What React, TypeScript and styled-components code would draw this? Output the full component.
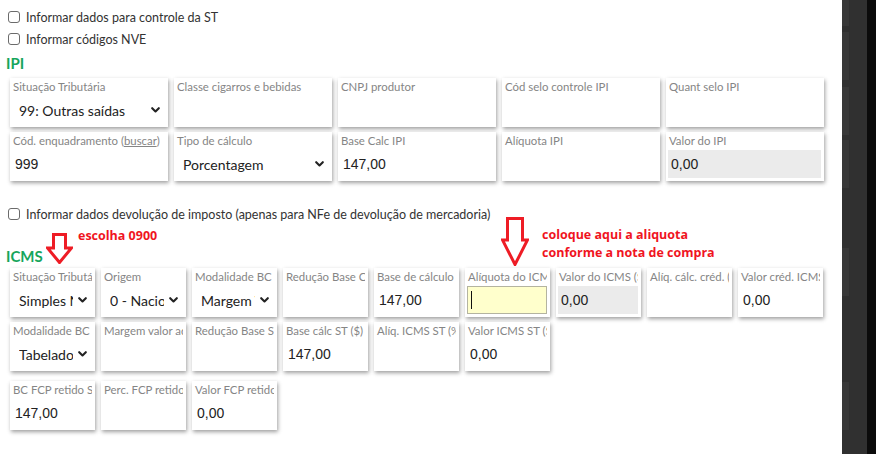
import React from "react";
import styled, { createGlobalStyle, css } from "styled-components";

const Global = createGlobalStyle`
  html, body { margin: 0; padding: 0; background: #fff; overflow: hidden; }
  body { font-family: "Lato", "Noto Sans", sans-serif; }
`;

const Page = styled.div`
  display: flex;
  width: 876px;
  height: 454px;
`;

const Main = styled.div`
  position: relative;
  flex: 1;
  padding: 6px 0 0 8px;
  box-sizing: border-box;
  background: #fff;
`;

const Side = styled.div`
  display: flex;
  width: 34px;
  height: 454px;
`;

const SideStrip = styled.div`
  width: 25px;
  background: #303030;
  display: flex;
  flex-direction: column;
`;

const SideBlock = styled.div<{ $top: number; $h: number }>`
  width: 7px;
  height: ${(p) => p.$h}px;
  margin-top: ${(p) => p.$top}px;
  background: #383838;
`;

const SideEdge = styled.div`
  width: 9px;
  background: #0b0b0b;
`;

const CheckRow = styled.label<{ $mt?: number }>`
  display: flex;
  align-items: center;
  height: 22px;
  margin-top: ${(p) => p.$mt ?? 0}px;
  font-size: 12.5px;
  color: #333;
`;

const Box = styled.span`
  width: 10px;
  height: 10px;
  border: 1px solid #6b6b6b;
  border-radius: 3px;
  margin-right: 6px;
  background: #fff;
  flex: none;
`;

const Heading = styled.div<{ $mt: number; $mb: number }>`
  margin: ${(p) => p.$mt}px 0 ${(p) => p.$mb}px -2px;
  height: 16px;
  line-height: 16px;
  font-size: 15px;
  font-weight: 700;
  color: #17a55c;
`;

const Grid = styled.div<{ $cols: number; $w: number; $mt?: number }>`
  display: grid;
  grid-template-columns: repeat(${(p) => p.$cols}, ${(p) => p.$w}px);
  column-gap: 6px;
  row-gap: 5px;
  margin: ${(p) => p.$mt ?? 0}px 0 0 2px;
`;

const Card = styled.div`
  height: 49px;
  box-sizing: border-box;
  padding: 3px 3px 3px 2px;
  background: #fff;
  box-shadow: 1px 2px 4px rgba(0, 0, 0, 0.38);
  display: flex;
  flex-direction: column;
  overflow: hidden;
`;

const Label = styled.div`
  height: 15px;
  line-height: 12px;
  padding-left: 1px;
  font-size: 11.4px;
  color: #858585;
  white-space: nowrap;
  overflow: hidden;
`;

const Link = styled.span`
  text-decoration: underline;
`;

const InputBox = styled.div<{ $kind?: "plain" | "disabled" | "focus" }>`
  height: 28px;
  box-sizing: border-box;
  display: flex;
  align-items: center;
  padding-left: 3px;
  font-family: "Liberation Sans", Arial, sans-serif;
  font-size: 14px;
  color: #222;
  ${(p) =>
    p.$kind === "disabled" &&
    css`
      background: #ebebeb;
    `}
  ${(p) =>
    p.$kind === "focus" &&
    css`
      background: #ffffcc;
      border: 1px solid #b4b4a0;
      padding-left: 3px;
    `}
`;

const Caret = styled.span`
  width: 1px;
  height: 18px;
  background: #111;
`;

const SelectBox = styled.div`
  height: 28px;
  display: flex;
  align-items: center;
  padding: 0 5px 0 7px;
  font-size: 14px;
  color: #222;
`;

const SelectText = styled.span`
  flex: 1;
  min-width: 0;
  white-space: nowrap;
  overflow: hidden;
`;

const Chevron = styled.svg`
  flex: none;
  width: 9px;
  height: 6px;
  margin-left: 5px;
`;

const Note = styled.div<{ $left: number; $top: number }>`
  position: absolute;
  left: ${(p) => p.$left}px;
  top: ${(p) => p.$top}px;
  font-family: "Open Sans", "Noto Sans", sans-serif;
  font-size: 12.5px;
  font-weight: 700;
  line-height: 18px;
  color: #f0141e;
  white-space: nowrap;
`;

const ArrowSvg = styled.svg<{ $left: number; $top: number }>`
  position: absolute;
  left: ${(p) => p.$left}px;
  top: ${(p) => p.$top}px;
`;

type FieldDef =
  | { label: React.ReactNode; type: "select"; value: string }
  | { label: React.ReactNode; type: "input"; value?: string; kind?: "plain" | "disabled" | "focus" };

function Field({ f }: { f: FieldDef }) {
  return (
    <Card>
      <Label>{f.label}</Label>
      {f.type === "select" ? (
        <SelectBox>
          <SelectText>{f.value}</SelectText>
          <Chevron viewBox="0 0 9 6">
            <path d="M1.2 1.2 L4.5 4.5 L7.8 1.2" fill="none" stroke="#222" strokeWidth="2.1" strokeLinecap="round" strokeLinejoin="round" />
          </Chevron>
        </SelectBox>
      ) : (
        <InputBox $kind={f.kind}>
          {f.kind === "focus" ? <Caret /> : f.value}
        </InputBox>
      )}
    </Card>
  );
}

function Arrow({ left, top, w, h, shaft, headY }: { left: number; top: number; w: number; h: number; shaft: number; headY: number }) {
  const s1 = (w - shaft) / 2;
  const s2 = s1 + shaft;
  const pts = `${s1},1.5 ${s2},1.5 ${s2},${headY} ${w - 1.5},${headY} ${w / 2},${h - 1.5} 1.5,${headY} ${s1},${headY}`;
  return (
    <ArrowSvg $left={left} $top={top} width={w} height={h} viewBox={`0 0 ${w} ${h}`}>
      <polygon points={pts} fill="#fff" stroke="#ee1c25" strokeWidth="3" strokeLinejoin="miter" />
    </ArrowSvg>
  );
}

const ipi: FieldDef[] = [
  { label: "Situação Tributária", type: "select", value: "99: Outras saídas" },
  { label: "Classe cigarros e bebidas", type: "input" },
  { label: "CNPJ produtor", type: "input" },
  { label: "Cód selo controle IPI", type: "input" },
  { label: "Quant selo IPI", type: "input" },
  { label: <>Cód. enquadramento (<Link>buscar</Link>)</>, type: "input", value: "999" },
  { label: "Tipo de cálculo", type: "select", value: "Porcentagem" },
  { label: "Base Calc IPI", type: "input", value: "147,00" },
  { label: "Alíquota IPI", type: "input" },
  { label: "Valor do IPI", type: "input", value: "0,00", kind: "disabled" },
];

const icms: FieldDef[] = [
  { label: "Situação Tributária", type: "select", value: "Simples Nacional" },
  { label: "Origem", type: "select", value: "0 - Nacional" },
  { label: "Modalidade BC", type: "select", value: "Margem Valor" },
  { label: "Redução Base Cálculo (%)", type: "input" },
  { label: "Base de cálculo ($)", type: "input", value: "147,00" },
  { label: "Alíquota do ICMS (%)", type: "input", kind: "focus" },
  { label: "Valor do ICMS ($)", type: "input", value: "0,00", kind: "disabled" },
  { label: "Alíq. cálc. créd. (%)", type: "input" },
  { label: "Valor créd. ICMS", type: "input", value: "0,00" },
  { label: "Modalidade BC ST", type: "select", value: "Tabelado" },
  { label: "Margem valor adicionado ST", type: "input" },
  { label: "Redução Base ST", type: "input" },
  { label: "Base cálc ST ($)", type: "input", value: "147,00" },
  { label: "Alíq. ICMS ST (%)", type: "input" },
  { label: "Valor ICMS ST ($)", type: "input", value: "0,00" },
];

const fcp: FieldDef[] = [
  { label: "BC FCP retido ST", type: "input", value: "147,00" },
  { label: "Perc. FCP retido ST", type: "input" },
  { label: "Valor FCP retido", type: "input", value: "0,00" },
];

export default function App() {
  return (
    <Page>
      <Global />
      <Main>
        <CheckRow>
          <Box />
          Informar dados para controle da ST
        </CheckRow>
        <CheckRow>
          <Box />
          Informar códigos NVE
        </CheckRow>
        <Heading $mt={5} $mb={7}>IPI</Heading>
        <Grid $cols={5} $w={158}>
          {ipi.map((f, i) => (
            <Field key={i} f={f} />
          ))}
        </Grid>
        <CheckRow $mt={22}>
          <Box />
          Informar dados devolução de imposto (apenas para NFe de devolução de mercadoria)
        </CheckRow>
        <Heading $mt={23} $mb={4}>ICMS</Heading>
        <Grid $cols={9} $w={85}>
          {icms.map((f, i) => (
            <Field key={i} f={f} />
          ))}
        </Grid>
        <Grid $cols={9} $w={85} $mt={10}>
          {fcp.map((f, i) => (
            <Field key={i} f={f} />
          ))}
        </Grid>
        <Note $left={78} $top={227}>escolha 0900</Note>
        <Note $left={542} $top={226}>
          coloque aqui a aliquota
          <br />
          conforme a nota de compra
        </Note>
        <Arrow left={46} top={233} w={27} h={31} shaft={12} headY={15} />
        <Arrow left={501} top={217} w={28} h={49} shaft={15} headY={23} />
      </Main>
      <Side>
        <SideStrip>
          <SideBlock $top={0} $h={26} />
          <SideBlock $top={6} $h={48} />
          <SideBlock $top={7} $h={48} />
          <SideBlock $top={5} $h={48} />
          <SideBlock $top={60} $h={48} />
          <SideBlock $top={86} $h={48} />
        </SideStrip>
        <SideEdge />
      </Side>
    </Page>
  );
}
